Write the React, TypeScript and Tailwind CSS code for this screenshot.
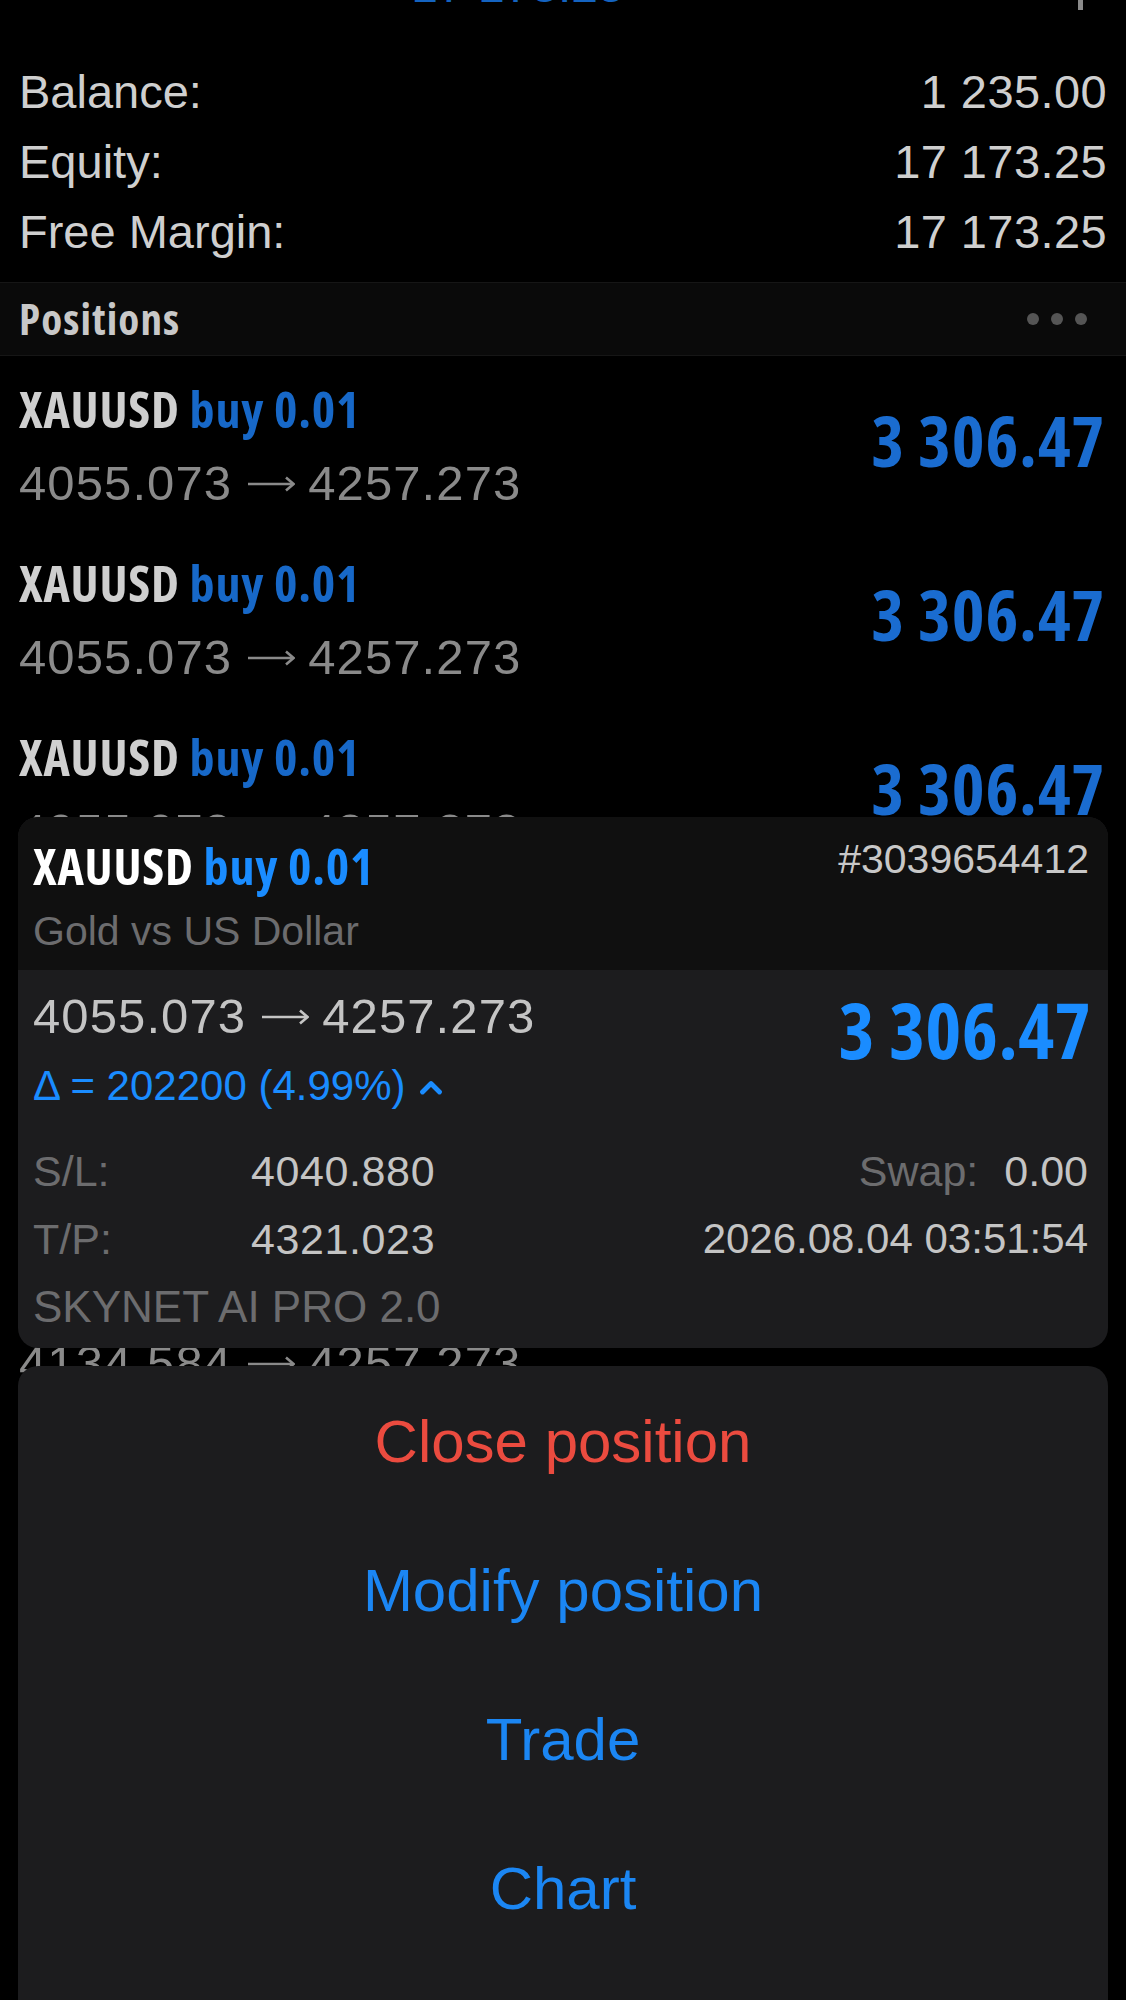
import React from "react";

const SANS = "[font-family:'Liberation_Sans',Arial,sans-serif]";
const COND = "[font-family:'Open_Sans',sans-serif] [font-stretch:75%] font-bold";

const summary = [
  { label: "Balance:", value: "1 235.00" },
  { label: "Equity:", value: "17 173.25" },
  { label: "Free Margin:", value: "17 173.25" },
];

function Arrow() {
  return (
    <svg viewBox="0 0 48 20" className="ml-[15px] mr-[13px] inline-block h-[20px] w-[48px] align-[6px]">
      <line x1="1" y1="10" x2="46" y2="10" stroke="currentColor" strokeWidth="2.6" />
      <polyline points="39,3.5 46.5,10 39,16.5" fill="none" stroke="currentColor" strokeWidth="2.6" />
    </svg>
  );
}

function PriceLine({ from, to, className }: { from: string; to: string; className: string }) {
  return (
    <div className={`${SANS} whitespace-nowrap text-[49px] tracking-[1.1px] ${className}`}>
      {from}
      <Arrow />
      {to}
    </div>
  );
}

function ListRow({ from, to, showProfit = true }: { from: string; to: string; showProfit?: boolean }) {
  return (
    <div className="flex h-[174px] justify-between pl-[19px] pr-[21px]">
      <div className="pt-[22px]">
        <div className={`${COND} text-[50px] leading-[62px] tracking-[0.8px] text-[#cfcfcf]`}>
          XAUUSD <span className="text-[#1768c8]">buy 0.01</span>
        </div>
        <PriceLine from={from} to={to} className="mt-[8px] leading-[70px] text-[#8a8a8a]" />
      </div>
      {showProfit && (
        <div className={`${COND} mb-[6px] self-center text-[70px] leading-[70px] tracking-[0.8px] text-[#1a6cd0]`}>
          3 306.47
        </div>
      )}
    </div>
  );
}

function ChevronUp() {
  return (
    <svg viewBox="0 0 24 15" className="ml-[14px] mt-[2px] h-[15px] w-[24px]">
      <polyline
        points="3.5,12 12,3.5 20.5,12"
        fill="none"
        stroke="#1a8cff"
        strokeWidth="4.8"
        strokeLinecap="round"
        strokeLinejoin="round"
      />
    </svg>
  );
}

function DetailCard() {
  return (
    <div className="absolute left-[18px] right-[18px] top-[817px] h-[531px] overflow-hidden rounded-[20px] bg-[#1c1c1e]">
      <div className="h-[153px] bg-[#101010] pl-[15px] pr-[19px] pt-[18px]">
        <div className="flex items-start justify-between">
          <div className={`${COND} text-[50px] leading-[62px] tracking-[0.8px] text-white`}>
            XAUUSD <span className="text-[#1a8cff]">buy 0.01</span>
          </div>
          <div className={`${SANS} -mt-[1px] text-[41px] leading-[50px] text-[#c8c8c8]`}>#3039654412</div>
        </div>
        <div className={`${SANS} mt-[9px] text-[41px] leading-[50px] text-[#6c6c6e]`}>Gold vs US Dollar</div>
      </div>

      <div className="pl-[15px] pr-[17px] pt-[16px]">
        <div className="flex items-start justify-between">
          <div>
            <PriceLine from="4055.073" to="4257.273" className="leading-[60px] text-[#c4c4c4]" />
            <div className={`${SANS} mt-[12px] flex items-center text-[42px] leading-[56px] text-[#1a8cff]`}>
              Δ = 202200 (4.99%)
              <ChevronUp />
            </div>
          </div>
          <div className={`${COND} mt-[4px] text-[77px] leading-[80px] tracking-[0.3px] text-[#1a8cff]`}>
            3 306.47
          </div>
        </div>

        <div className={`${SANS} mt-[23px] pr-[3px] text-[43px] leading-[68px]`}>
          <div className="flex justify-between">
            <div className="flex">
              <span className="w-[218px] text-[#6c6c6e]">S/L:</span>
              <span className="tracking-[0.6px] text-[#c4c4c4]">4040.880</span>
            </div>
            <div className="flex gap-[26px]">
              <span className="text-[#6c6c6e]">Swap:</span>
              <span className="text-[#c4c4c4]">0.00</span>
            </div>
          </div>
          <div className="flex justify-between">
            <div className="flex">
              <span className="w-[218px] text-[#6c6c6e]">T/P:</span>
              <span className="tracking-[0.6px] text-[#c4c4c4]">4321.023</span>
            </div>
            <span className="text-[42px] text-[#c4c4c4]">2026.08.04 03:51:54</span>
          </div>
          <div className="text-[44px] text-[#6c6c6e]">SKYNET AI PRO 2.0</div>
        </div>
      </div>
    </div>
  );
}

function ActionSheet() {
  const actions = [
    { label: "Close position", color: "text-[#eb4b3f]" },
    { label: "Modify position", color: "text-[#1b86f3]" },
    { label: "Trade", color: "text-[#1b86f3]" },
    { label: "Chart", color: "text-[#1b86f3]" },
  ];
  return (
    <div className="absolute bottom-0 left-[18px] right-[18px] top-[1366px] rounded-t-[20px] bg-[#1c1c1e] pt-[1px]">
      {actions.map((a) => (
        <div
          key={a.label}
          className={`${SANS} ${a.color} flex h-[149px] items-center justify-center text-[60px]`}
        >
          {a.label}
        </div>
      ))}
    </div>
  );
}

export default function App() {
  return (
    <div className="relative h-[2000px] w-full overflow-hidden bg-black">
      {/* nav bar, scrolled mostly out of view */}
      <div className="relative flex h-[12px] justify-center overflow-hidden">
        <span className={`${SANS} -mt-[38px] mr-[90px] text-[48px] leading-[48px] text-[#1463c0]`}>17 173.25</span>
        <span className="absolute right-[43px] top-0 h-[10px] w-[5px] bg-[#8a8a8a]" />
      </div>

      <div className={`${SANS} mt-[45px] pl-[19px] pr-[19px] text-[47px] leading-[70px] text-[#cfcfcf]`}>
        {summary.map((r) => (
          <div key={r.label} className="flex justify-between">
            <span>{r.label}</span>
            <span className="tracking-[0.4px]">{r.value}</span>
          </div>
        ))}
      </div>

      <div className="mt-[15px] flex h-[74px] items-center justify-between border-y border-[#161616] bg-[#0a0a0a] pl-[19px] pr-[39px]">
        <span className={`${COND} text-[43px] leading-[72px] tracking-[1.1px] text-[#c8c8c8]`}>Positions</span>
        <div className="flex gap-[12px]">
          <span className="h-[12px] w-[12px] rounded-full bg-[#555555]" />
          <span className="h-[12px] w-[12px] rounded-full bg-[#555555]" />
          <span className="h-[12px] w-[12px] rounded-full bg-[#555555]" />
        </div>
      </div>

      <ListRow from="4055.073" to="4257.273" />
      <ListRow from="4055.073" to="4257.273" />
      <ListRow from="4055.073" to="4257.273" />
      <div className="h-[358px]" />
      <ListRow from="4134.584" to="4257.273" showProfit={false} />

      <DetailCard />
      <ActionSheet />
    </div>
  );
}
